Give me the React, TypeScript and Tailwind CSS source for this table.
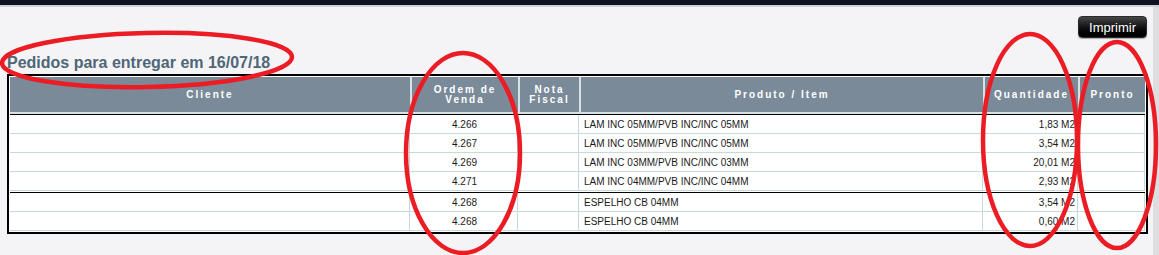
const cols = "grid grid-cols-[400px_106px_59px_402px_93px_65px] gap-x-[2px]";

type Pedido = { ordem: string; produto: string; qtd: string };

const grupos: Pedido[][] = [
  [
    { ordem: "4.266", produto: "LAM INC 05MM/PVB INC/INC 05MM", qtd: "1,83 M2" },
    { ordem: "4.267", produto: "LAM INC 05MM/PVB INC/INC 05MM", qtd: "3,54 M2" },
    { ordem: "4.269", produto: "LAM INC 03MM/PVB INC/INC 03MM", qtd: "20,01 M2" },
    { ordem: "4.271", produto: "LAM INC 04MM/PVB INC/INC 04MM", qtd: "2,93 M2" },
  ],
  [
    { ordem: "4.268", produto: "ESPELHO CB 04MM", qtd: "3,54 M2" },
    { ordem: "4.268", produto: "ESPELHO CB 04MM", qtd: "0,60 M2" },
  ],
];

const Th = ({ children }: { children: React.ReactNode }) => (
  <div className="flex h-[35px] items-center justify-center bg-[#7a8a99] text-center text-[10px] font-bold leading-[10px] tracking-[2px] text-white">
    {children}
  </div>
);

const Row = ({ p }: { p: Pedido }) => (
  <div className={`${cols} h-[19px] border-b border-[#c6dada] text-[10px] text-[#1a1a1a]`}>
    <div className="border-r border-[#c6dada]" />
    <div className="flex items-center justify-center border-r border-[#c6dada]">{p.ordem}</div>
    <div className="border-r border-[#c6dada]" />
    <div className="flex items-center border-r border-[#c6dada] pl-[3px]">{p.produto}</div>
    <div className="flex items-center justify-end border-r border-[#c6dada] pr-[2px]">{p.qtd}</div>
    <div className="border-r border-[#c6dada]" />
  </div>
);

export default function App() {
  return (
    <div className="relative h-[255px] w-[1159px] overflow-hidden bg-[#f4f4f6] font-['Liberation_Sans',Arial,sans-serif]">
      <div className="h-[5px] bg-[#0d1321]" />
      <div className="h-[2px] bg-[#d0d1d5]" />

      <div className="flex">
        <div className="flex-1 pl-[7px] pr-[5px]">
          <div className="flex justify-end pr-px pt-[9px]">
            <button className="h-[22px] w-[69px] rounded-[4px] border border-[#2a2a2a] bg-gradient-to-b from-[#474747] via-[#141414] to-[#000] text-[13px] leading-none text-white shadow-[0_1px_1px_rgba(0,0,0,0.3)]">
              Imprimir
            </button>
          </div>

          <h1 className="mt-[16px] mb-[2px] text-[16px] font-bold leading-[18px] text-[#4f6677]">
            Pedidos para entregar em 16/07/18
          </h1>

          <div className="border-2 border-black bg-white p-px">
            <div className={`${cols} bg-[#d6e2e3]`}>
              <Th>Cliente</Th>
              <Th>
                Ordem de
                <br />
                Venda
              </Th>
              <Th>
                Nota
                <br />
                Fiscal
              </Th>
              <Th>Produto / Item</Th>
              <Th>Quantidade</Th>
              <Th>Pronto</Th>
            </div>
            <div className="h-[2px] bg-[#d6e2e3]" />
            <div className="h-px bg-black" />

            {grupos.map((g, gi) => (
              <div key={gi}>
                {gi > 0 && (
                  <>
                    <div className="h-px bg-white" />
                    <div className="h-px bg-black" />
                  </>
                )}
                {g.map((p, i) => (
                  <Row key={i} p={p} />
                ))}
              </div>
            ))}
          </div>
        </div>
        <div className="h-[248px] w-[6px] bg-[#dedee0]" />
      </div>

      {/* marcações em vermelho */}
      <svg
        className="pointer-events-none absolute inset-0"
        width="1159"
        height="255"
        viewBox="0 0 1159 255"
        fill="none"
        stroke="#ec1c24"
        strokeWidth="4.5"
      >
        <ellipse cx="147" cy="60" rx="145" ry="27" transform="rotate(-1.2 147 60)" />
        <ellipse cx="463" cy="153" rx="57" ry="100" />
        <ellipse cx="1030" cy="140" rx="47" ry="106" />
        <ellipse cx="1117" cy="145" rx="39" ry="103" />
      </svg>
    </div>
  );
}
